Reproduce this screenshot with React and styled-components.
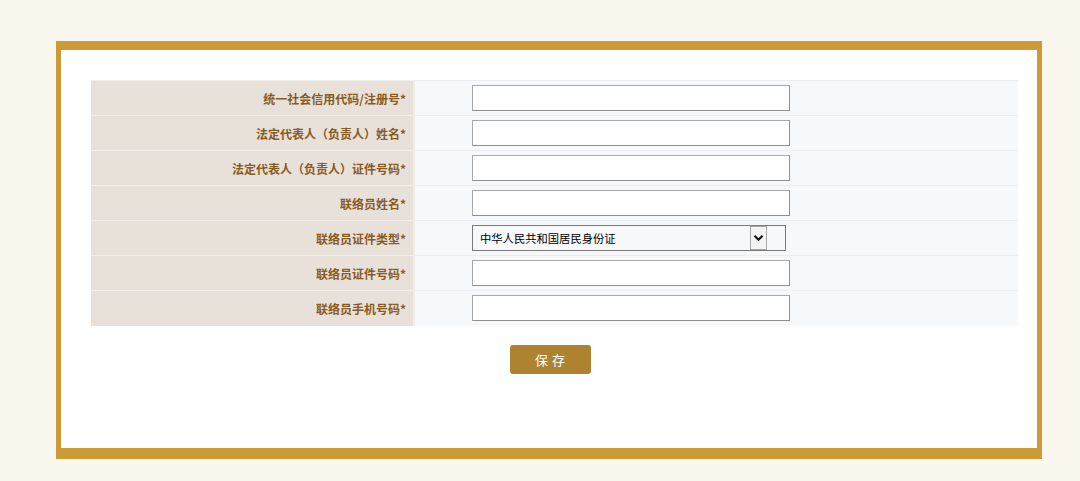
import React from 'react';
import styled, { createGlobalStyle } from 'styled-components';

const GlobalStyle = createGlobalStyle`
  html, body {
    margin: 0;
    padding: 0;
    background: #faf7ef;
    font-family: "Noto Sans CJK SC", "Noto Sans", sans-serif;
  }
`;

const Page = styled.div`
  width: 1080px;
  height: 481px;
  padding-top: 41px;
  box-sizing: border-box;
`;

const Frame = styled.div`
  margin-left: 56px;
  width: 986px;
  height: 418px;
  box-sizing: border-box;
  background: #fff;
  border-style: solid;
  border-color: #cc9b38;
  border-width: 9px 5px 11px 5px;
  padding: 30px 19px 0 30px;
`;

const FormTable = styled.table`
  width: 927px;
  border-collapse: collapse;
  table-layout: fixed;
`;

const Row = styled.tr`
  height: 35px;
`;

const Label = styled.th`
  width: 323px;
  box-sizing: border-box;
  background: #e8e1da;
  border-top: 1px solid #f1ede9;
  border-right: 2px solid #f1ece6;
  padding: 0 7px 0 0;
  text-align: right;
  font-size: 12px;
  font-weight: bold;
  color: #8a5b1e;
  white-space: nowrap;
`;

const Value = styled.td`
  background: #f7f8fa;
  border-top: 1px solid #ebedf0;
  padding: 0 0 0 57px;
`;

const TextInput = styled.input`
  display: block;
  width: 318px;
  height: 26px;
  box-sizing: border-box;
  border: 1px solid #8f8f8f;
  border-top-color: #a9a9a9;
  border-left-color: #a9a9a9;
  background: #fff;
  margin: 0;
  padding: 0 4px;
  font-size: 12px;
  outline: none;
`;

const SelectBox = styled.div`
  display: flex;
  align-items: center;
  width: 314px;
  height: 26px;
  box-sizing: border-box;
  border: 1px solid #7a7a7a;
  background: #f7f8fa;
  padding: 0 18px 0 7px;
`;

const SelectText = styled.span`
  flex: 1;
  font-size: 11.3px;
  color: #000;
  font-family: "Noto Sans CJK SC", sans-serif;
`;

const ArrowBox = styled.div`
  display: flex;
  align-items: center;
  justify-content: center;
  width: 17px;
  height: 24px;
  box-sizing: border-box;
  border: 1px solid #a8a8a8;
  background: #f3f3f3;
`;

const Actions = styled.div`
  display: flex;
  justify-content: center;
  padding: 19px 0 0 0;
  margin-left: -9px;
`;

const SaveButton = styled.button`
  width: 81px;
  height: 29px;
  border: none;
  border-radius: 3px;
  background: #ad832f;
  color: #fff;
  font-size: 13px;
  letter-spacing: 4px;
  text-indent: 4px;
  font-family: "Noto Sans CJK SC", sans-serif;
  cursor: pointer;
`;

const fields = [
  '统一社会信用代码/注册号*',
  '法定代表人（负责人）姓名*',
  '法定代表人（负责人）证件号码*',
  '联络员姓名*',
  { label: '联络员证件类型*', select: '中华人民共和国居民身份证' },
  '联络员证件号码*',
  '联络员手机号码*',
];

const Chevron = () => (
  <svg width="11" height="8" viewBox="0 0 11 8">
    <path d="M1.5 1.8 L5.5 5.8 L9.5 1.8" fill="none" stroke="#111" strokeWidth="2" />
  </svg>
);

const App = () => {
  return (
    <>
      <GlobalStyle />
      <Page>
        <Frame>
          <FormTable>
            <tbody>
              {fields.map((f, i) => {
                const label = typeof f === 'string' ? f : f.label;
                return (
                  <Row key={i}>
                    <Label>{label}</Label>
                    <Value>
                      {typeof f === 'string' ? (
                        <TextInput type="text" />
                      ) : (
                        <SelectBox>
                          <SelectText>{f.select}</SelectText>
                          <ArrowBox>
                            <Chevron />
                          </ArrowBox>
                        </SelectBox>
                      )}
                    </Value>
                  </Row>
                );
              })}
            </tbody>
          </FormTable>
          <Actions>
            <SaveButton>保存</SaveButton>
          </Actions>
        </Frame>
      </Page>
    </>
  );
};

export default App;
